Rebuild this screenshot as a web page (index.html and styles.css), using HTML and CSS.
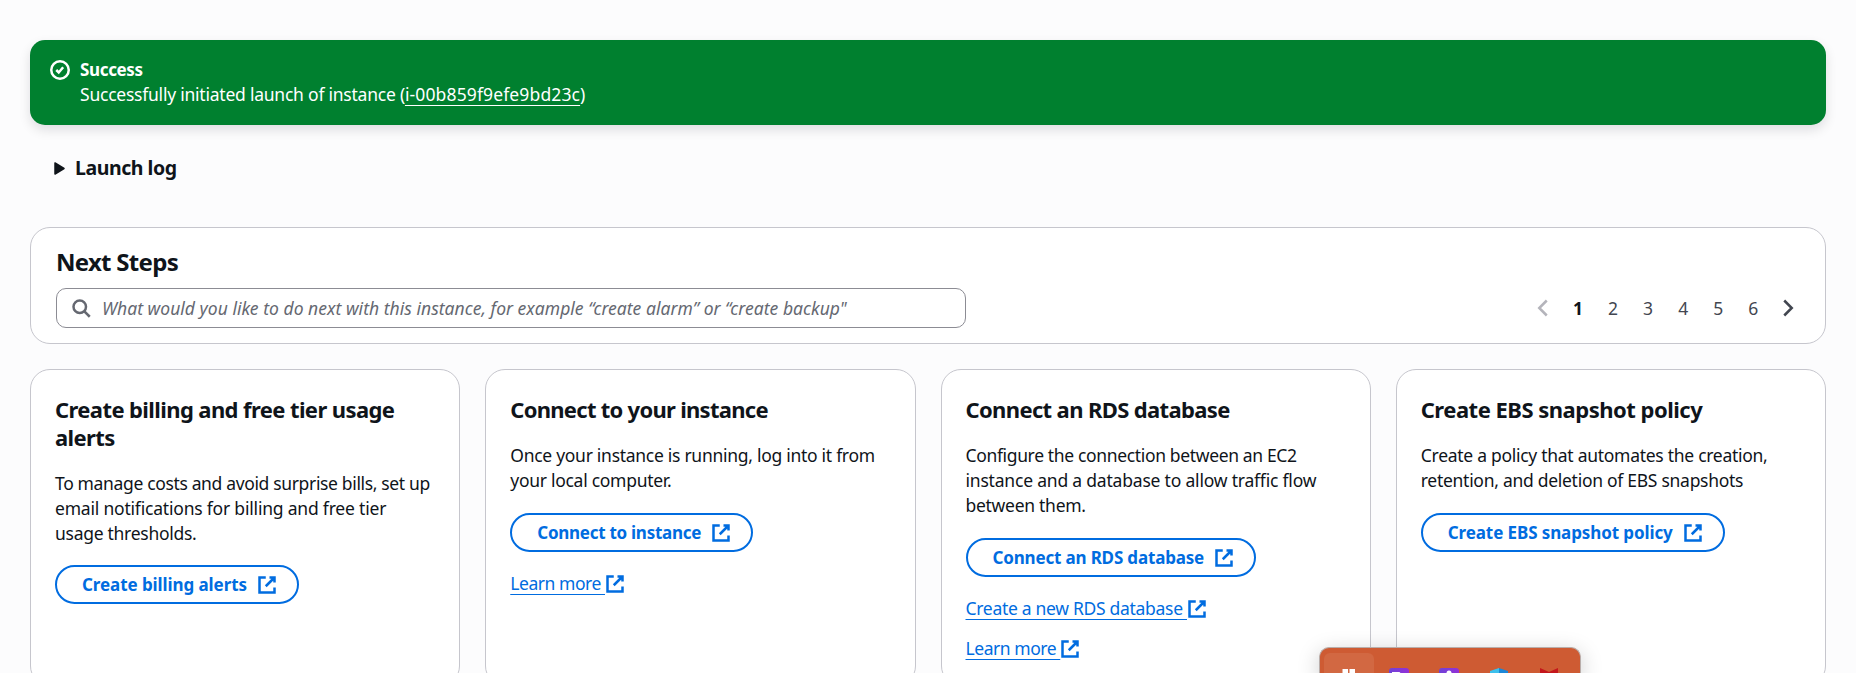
FILE: index.html
```
<!DOCTYPE html>
<html lang="en">
<head>
<meta charset="utf-8">
<title>Launch an instance</title>
<link rel="stylesheet" href="styles.css">
</head>
<body>
<svg class="defs" width="0" height="0">
  <symbol id="external" viewBox="0 0 16 16"><path d="M10 2h4v4M7 9l7-7M14 10v4H2V2h5"/></symbol>
</svg>
<main class="page">
  <section class="flash">
    <svg class="icon" viewBox="0 0 16 16"><circle cx="8" cy="8" r="7"/><path d="m5 8 2 2 3.52-4.2"/></svg>
    <div>
      <div class="flash-title">Success</div>
      <div class="flash-text">Successfully initiated launch of instance (<a class="flash-link">i-00b859f9efe9bd23c</a>)</div>
    </div>
  </section>

  <div class="expander">
    <svg class="caret" viewBox="0 0 11 13"><path d="M1 1v11l9-5.5z"/></svg>
    <span>Launch log</span>
  </div>

  <section class="panel">
    <h2 class="panel-title">Next Steps</h2>
    <div class="panel-row">
      <div class="search">
        <svg class="icon" viewBox="0 0 16 16"><circle cx="7" cy="7" r="5"/><path d="m15 15-4.5-4.5"/></svg>
        <span>What would you like to do next with this instance, for example “create alarm” or “create backup"</span>
      </div>
      <nav class="pages">
        <span class="page-item page-off"><svg class="icon" viewBox="0 0 16 16"><path d="M11 2 5 8l6 6"/></svg></span>
        <span class="page-item page-current">1</span>
        <span class="page-item">2</span>
        <span class="page-item">3</span>
        <span class="page-item">4</span>
        <span class="page-item">5</span>
        <span class="page-item">6</span>
        <span class="page-item"><svg class="icon" viewBox="0 0 16 16"><path d="m5 2 6 6-6 6"/></svg></span>
      </nav>
    </div>
  </section>

  <section class="cards">
    <article class="card billing">
      <h3 class="card-title">Create billing and free tier usage<br>alerts</h3>
      <p class="card-text"><span class="tight">To manage costs and avoid surprise bills, set up</span><br><span class="loose">email notifications for billing and free tier</span><br>usage thresholds.</p>
      <a class="button"><span>Create billing alerts</span><svg class="icon"><use href="#external"/></svg></a>
    </article>
    <article class="card connect">
      <h3 class="card-title">Connect to your instance</h3>
      <p class="card-text">Once your instance is running, log into it from<br>your local computer.</p>
      <a class="button"><span>Connect to instance</span><svg class="icon"><use href="#external"/></svg></a>
      <div class="links">
        <a class="link learn"><span>Learn more&nbsp;</span><svg class="icon"><use href="#external"/></svg></a>
      </div>
    </article>
    <article class="card rds">
      <h3 class="card-title">Connect an RDS database</h3>
      <p class="card-text"><span class="tight">Configure the connection between an EC2</span><br><span class="loose">instance and a database to allow traffic flow</span><br>between them.</p>
      <a class="button"><span>Connect an RDS database</span><svg class="icon"><use href="#external"/></svg></a>
      <div class="links">
        <a class="link"><span>Create a new RDS database&nbsp;</span><svg class="icon"><use href="#external"/></svg></a>
        <a class="link learn"><span>Learn more&nbsp;</span><svg class="icon"><use href="#external"/></svg></a>
      </div>
    </article>
    <article class="card ebs">
      <h3 class="card-title">Create EBS snapshot policy</h3>
      <p class="card-text">Create a policy that automates the creation,<br>retention, and deletion of EBS snapshots</p>
      <a class="button"><span>Create EBS snapshot policy</span><svg class="icon"><use href="#external"/></svg></a>
    </article>
  </section>
</main>

<div class="taskbar">
  <span class="app app-active"><svg viewBox="0 0 20 20"><path fill="#fff" d="M3.5 1H9v6H3.5zM10.5 1H16v6h-5.500zM3.500 8.500H9v6H3.500zM10.500 8.500H16v6h-5.500z"/></svg></span>
  <span class="app"><svg viewBox="0 0 20 20"><defs><linearGradient id="violet"><stop offset="0" stop-color="#6f43d8"/><stop offset="1" stop-color="#9330d6"/></linearGradient></defs><rect width="20" height="20" rx="3" fill="url(#violet)"/><path fill="#fff" d="M3 4h7.500l1.500 1.500V16H3z"/></svg></span>
  <span class="app"><svg viewBox="0 0 20 20"><rect width="20" height="20" rx="3" fill="url(#violet)"/><circle cx="10" cy="5" r="2.500" fill="#fff"/></svg></span>
  <span class="app"><svg viewBox="0 0 20 20"><path fill="#3cc0ec" d="M10 0 1 3v12h9z"/><path fill="#1b87d8" d="m10 0 9 3v12h-9z"/></svg></span>
  <span class="app"><svg viewBox="0 0 20 20"><path fill="#c4161c" d="m1 0 9 4 9-4v16H1z"/></svg></span>
</div>
</body>
</html>
```
FILE: styles.css
```
* { box-sizing: border-box; }

html, body { height: 100%; overflow: hidden; }

body {
  margin: 0;
  background: #fcfcfd;
  color: #0f141a;
  font: 400 17.5px/25px "Noto Sans", "Open Sans", sans-serif;
  letter-spacing: -0.28px;
}

.defs { display: block; }

.page { height: 100%; padding: 40px 30px 0; overflow: hidden; }

.icon {
  display: block;
  flex: none;
  width: 20px;
  height: 20px;
  fill: none;
  stroke: currentColor;
  stroke-width: 2;
}

.flash {
  display: flex;
  gap: 10px;
  height: 85px;
  padding: 17px 20px;
  border-radius: 15px;
  background: #00802f;
  color: #fff;
  box-shadow: 0 5px 12px rgba(0, 7, 22, 0.12);
}
.flash .icon { margin-top: 3px; }
.flash-title { font-size: 17px; font-weight: 700; letter-spacing: -0.35px; }
.flash-text { letter-spacing: -0.23px; white-space: nowrap; }
.flash-link {
  letter-spacing: 0.13px;
  text-decoration: underline 1px;
  text-underline-offset: 4px;
  text-decoration-skip-ink: none;
}

.expander {
  display: flex;
  align-items: center;
  gap: 10px;
  margin: 30px 0 47px 24px;
  font-size: 19.5px;
  font-weight: 700;
  letter-spacing: -0.45px;
}
.caret {
  width: 11px;
  height: 13px;
  margin-top: 2px;
  fill: #0f141a;
  stroke: #0f141a;
  stroke-width: 1.5;
  stroke-linejoin: round;
}

.panel {
  height: 117px;
  padding: 19px 19px 0 25px;
  border: 1px solid #c6c6cd;
  border-radius: 20px;
  background: #fff;
}
.panel-title {
  margin: 0 0 11px;
  font-size: 24px;
  line-height: 30px;
  font-weight: 700;
  letter-spacing: -0.71px;
}
.panel-row { display: flex; justify-content: space-between; align-items: center; }

.search {
  display: flex;
  align-items: center;
  gap: 11px;
  width: 910px;
  height: 40px;
  padding-left: 14px;
  border: 1px solid #8c8c94;
  border-radius: 10px;
  color: #656871;
  font-style: italic;
  letter-spacing: 0.03px;
  white-space: nowrap;
}

.pages { display: flex; color: #424650; letter-spacing: 0; }
.page-item { display: flex; align-items: center; justify-content: center; width: 35.1px; height: 25px; }
.page-current { color: #0f141a; font-weight: 700; }
.page-off { color: #b4b4bb; }

.cards {
  display: grid;
  grid-template-columns: repeat(4, minmax(0, 1fr));
  gap: 25px;
  margin-top: 25px;
}
.card {
  height: 317px;
  padding: 25px 24px 0;
  border: 1px solid #c6c6cd;
  border-radius: 20px;
  background: #fff;
}
.card-title {
  margin: 0 0 19.5px;
  font-size: 22px;
  line-height: 28px;
  font-weight: 700;
  white-space: nowrap;
}
.billing .card-title { letter-spacing: -0.6px; }
.connect .card-title { letter-spacing: -0.72px; }
.rds .card-title { letter-spacing: -0.64px; }
.ebs .card-title { letter-spacing: -0.5px; }

.card-text { margin: 0 0 20.5px; white-space: nowrap; }
.billing .card-text { margin-bottom: 19.5px; }
.tight { letter-spacing: -0.35px; }
.loose { letter-spacing: -0.2px; }

.button {
  display: flex;
  align-items: center;
  width: fit-content;
  height: 39px;
  padding: 0 20px 0 25px;
  border: 2px solid #006ce0;
  border-radius: 20px;
  color: #006ce0;
  font-size: 17px;
  font-weight: 700;
  white-space: nowrap;
}
.button .icon { margin-left: 10px; }
.billing .button { letter-spacing: -0.08px; }
.connect .button { letter-spacing: -0.27px; }
.rds .button { letter-spacing: -0.17px; }
.ebs .button { letter-spacing: -0.1px; }

.links { display: flex; flex-direction: column; align-items: flex-start; gap: 15px; margin-top: 19px; }
.link { display: flex; align-items: center; color: #006ce0; }
.link span {
  letter-spacing: -0.3px;
  text-decoration: underline 1px;
  text-underline-offset: 4px;
  text-decoration-skip-ink: none;
}
.learn span { letter-spacing: -0.45px; }

/* Floating system taskbar, partly below the viewport */
.taskbar {
  position: absolute;
  left: 1319px;
  top: 647px;
  display: flex;
  width: 262px;
  height: 26px;
  padding: 5px 4px 0;
  border: 1px solid #b9aeab;
  border-bottom: 0;
  border-radius: 10px 10px 0 0;
  background: #ce5b33;
  box-shadow: 0 6px 22px rgba(0, 0, 0, 0.22);
  overflow: hidden;
}
.app { display: flex; flex: none; justify-content: center; width: 50px; height: 20px; padding-top: 15px; border-radius: 6px 6px 0 0; overflow: hidden; }
.app-active { background: #d26842; }
.app svg { flex: none; width: 20px; height: 20px; }
```
